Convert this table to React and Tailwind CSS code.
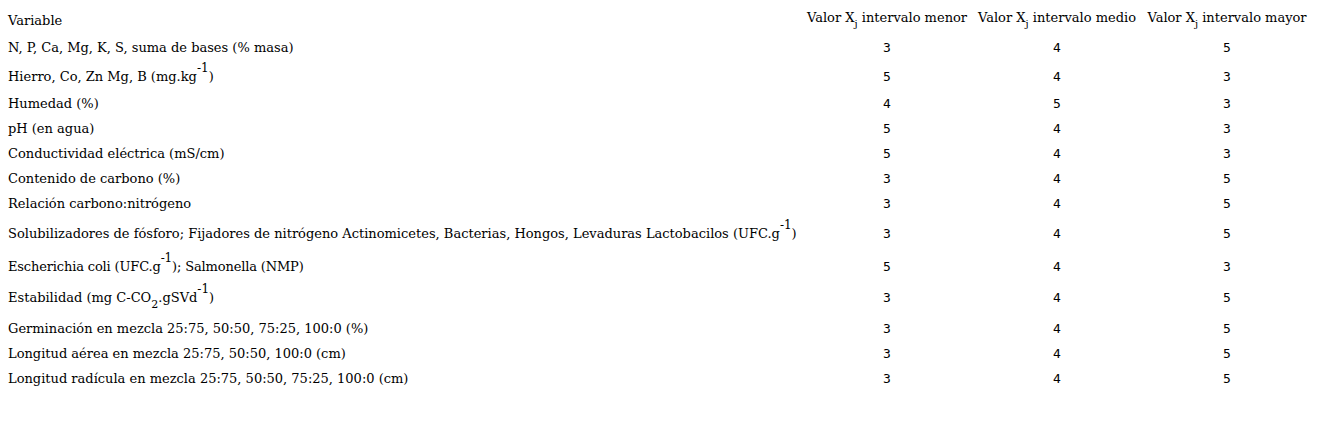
import React from 'react';

const sup = 'text-[12px] align-[3px]';

const rows = [
  { label: <>N, P, Ca, Mg, K, S, suma de bases (% masa)</>, v: [3, 4, 5], h: 'h-[28px]' },
  { label: <>Hierro, Co, Zn Mg, B (mg.kg<sup className={sup}>-1</sup>)</>, v: [5, 4, 3], h: 'h-[30px]' },
  { label: <>Humedad (%)</>, v: [4, 5, 3], h: 'h-[24px]' },
  { label: <>pH (en agua)</>, v: [5, 4, 3], h: 'h-[26px]' },
  { label: <>Conductividad eléctrica (mS/cm)</>, v: [5, 4, 3], h: 'h-[24px]' },
  { label: <>Contenido de carbono (%)</>, v: [3, 4, 5], h: 'h-[26px]' },
  { label: <>Relación carbono:nitrógeno</>, v: [3, 4, 5], h: 'h-[24px]' },
  {
    label: <>Solubilizadores de fósforo; Fijadores de nitrógeno Actinomicetes, Bacterias, Hongos, Levaduras Lactobacilos (UFC.g<sup className={sup}>-1</sup>)</>,
    v: [3, 4, 5], h: 'h-[36px]',
  },
  { label: <>Escherichia coli (UFC.g<sup className={sup}>-1</sup>); Salmonella (NMP)</>, v: [5, 4, 3], h: 'h-[30px]', narrow: true },
  { label: <>Estabilidad (mg C-CO<sub className="text-[11px] align-[-4px]">2</sub>.gSVd<sup className={sup}>-1</sup>)</>, v: [3, 4, 5], h: 'h-[32px]' },
  { label: <>Germinación en mezcla 25:75, 50:50, 75:25, 100:0 (%)</>, v: [3, 4, 5], h: 'h-[30px]' },
  { label: <>Longitud aérea en mezcla 25:75, 50:50, 100:0 (cm)</>, v: [3, 4, 5], h: 'h-[20px]' },
  { label: <>Longitud radícula en mezcla 25:75, 50:50, 75:25, 100:0 (cm)</>, v: [3, 4, 5], h: 'h-[30px]' },
];

const heads = ['menor', 'medio', 'mayor'];

export default function App() {
  return (
    <div className="w-[1317px] h-[428px] bg-white text-black font-['DejaVu_Serif',serif] text-[13px] leading-none pt-[5px]">
      <div className="grid grid-cols-[802px_170px_170px_170px] h-[28px] items-center">
        <div className="pl-[8px] pt-[2px]">Variable</div>
        {heads.map((h) => (
          <div key={h} className="text-center whitespace-nowrap -mt-[4px]">
            Valor X<sub className="text-[10px] align-[-3px]">j</sub> intervalo {h}
          </div>
        ))}
      </div>
      {rows.map((r, i) => (
        <div key={i} className={`grid grid-cols-[802px_170px_170px_170px] items-center ${r.h}`}>
          <div className={`pl-[8px] whitespace-nowrap ${r.narrow ? 'tracking-[-0.15px]' : ''}`}>
            {r.label}
          </div>
          {r.v.map((n, j) => (
            <div key={j} className="text-center font-['DejaVu_Sans_Mono',monospace]">{n}</div>
          ))}
        </div>
      ))}
    </div>
  );
}
